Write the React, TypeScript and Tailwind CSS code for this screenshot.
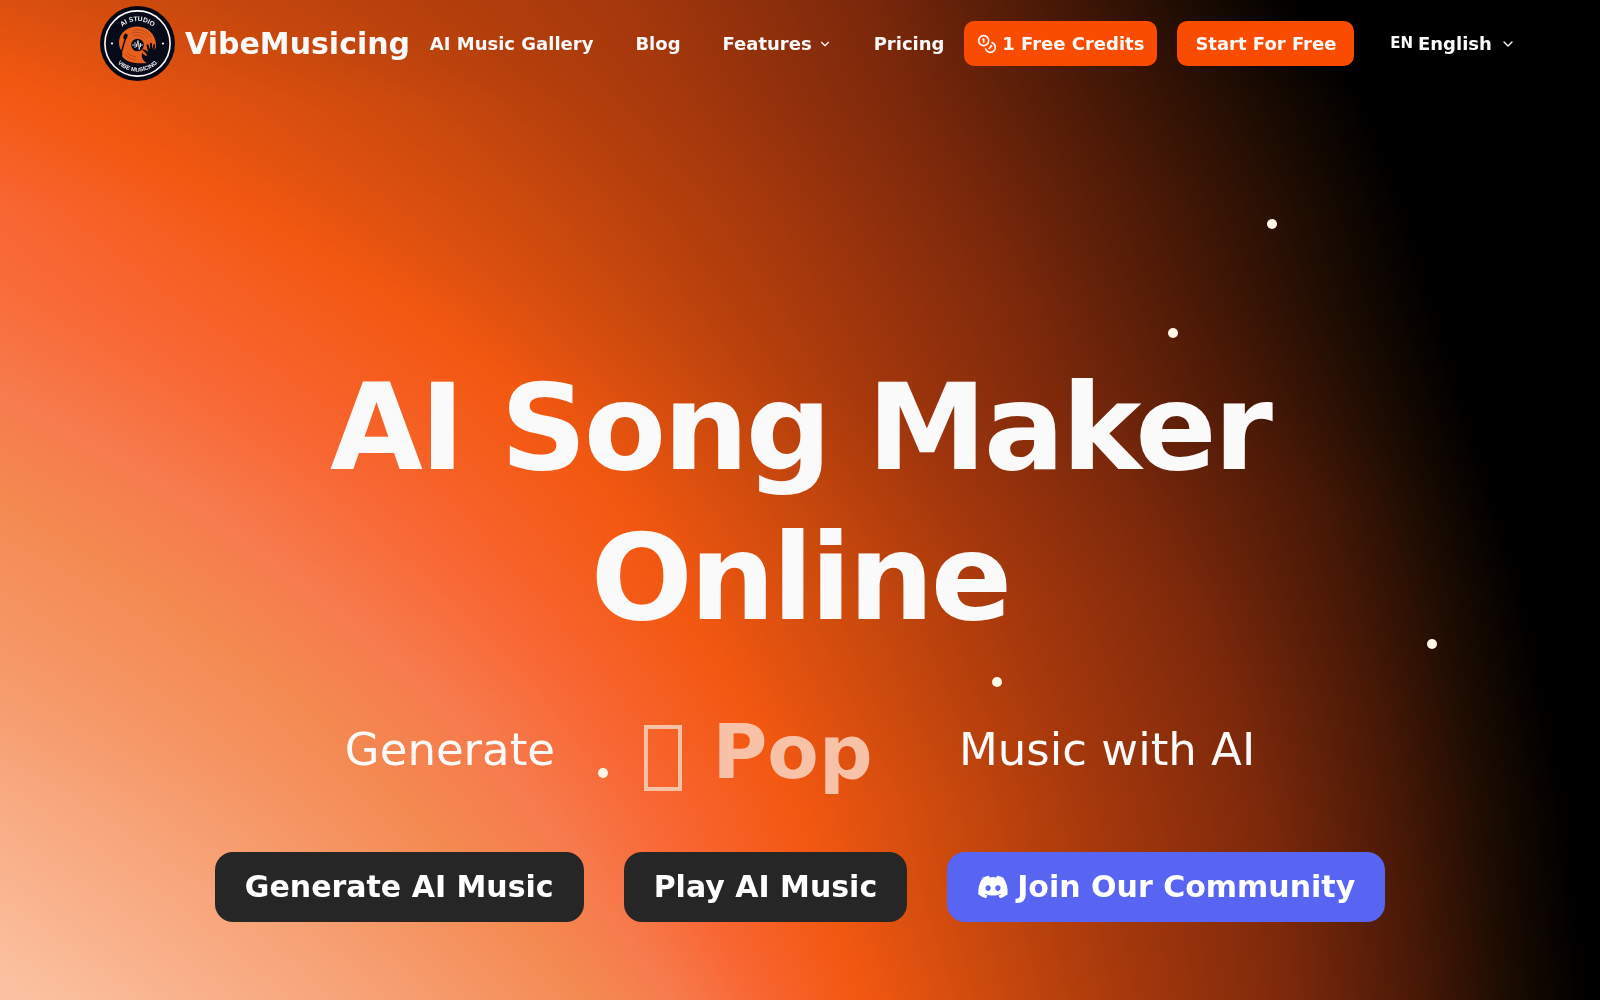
import { useLayoutEffect, useRef } from "react";
import { ChevronDown, Coins } from "lucide-react";
import { FaDiscord } from "react-icons/fa";

/* Colours of the glow, from its warm core to black. */
const GLOW_COLORS: number[][] = [
  [251, 193, 160],
  [247, 161, 117],
  [244, 138, 82],
  [247, 122, 76],
  [248, 102, 50],
  [243, 88, 17],
  [204, 74, 13],
  [166, 56, 12],
  [125, 41, 11],
  [70, 24, 6],
  [28, 12, 2],
  [0, 0, 0],
];

/* Where each colour sits (0-1600) on eleven evenly spaced rows of the page. */
const GLOW_ROWS: number[][] = [
  [-1100, -900, -750, -600, -420, -200, 150, 620, 860, 1060, 1190, 1300],
  [-1000, -820, -660, -480, -230, 50, 400, 680, 900, 1110, 1260, 1370],
  [-950, -760, -560, -340, 0, 230, 520, 760, 960, 1170, 1310, 1410],
  [-900, -680, -420, -160, 110, 400, 610, 820, 1020, 1210, 1340, 1440],
  [-820, -560, -210, 40, 260, 530, 700, 870, 1060, 1260, 1380, 1470],
  [-720, -420, 0, 210, 400, 615, 780, 940, 1130, 1320, 1420, 1500],
  [-580, -260, 170, 340, 505, 675, 850, 1010, 1190, 1350, 1450, 1530],
  [-430, -60, 300, 455, 590, 740, 890, 1050, 1230, 1380, 1470, 1550],
  [-280, 130, 400, 540, 660, 795, 940, 1090, 1260, 1400, 1490, 1570],
  [-120, 270, 500, 610, 705, 825, 960, 1110, 1280, 1415, 1500, 1580],
  [30, 380, 590, 680, 760, 860, 990, 1130, 1290, 1425, 1510, 1590],
];

function colorAt(x: number, stops: number[]): number[] {
  if (x <= stops[0]) return GLOW_COLORS[0];
  for (let i = 1; i < stops.length; i++) {
    if (x <= stops[i]) {
      const t = (x - stops[i - 1]) / (stops[i] - stops[i - 1]);
      return GLOW_COLORS[i].map((c, k) => GLOW_COLORS[i - 1][k] * (1 - t) + c * t);
    }
  }
  return GLOW_COLORS[GLOW_COLORS.length - 1];
}

function Glow() {
  const ref = useRef<HTMLCanvasElement>(null);
  useLayoutEffect(() => {
    const canvas = ref.current;
    const ctx = canvas?.getContext("2d");
    if (!canvas || !ctx) return;
    const { width, height } = canvas;
    const image = ctx.createImageData(width, height);
    for (let y = 0; y < height; y++) {
      const pos = (y / (height - 1)) * (GLOW_ROWS.length - 1);
      const row = Math.min(Math.floor(pos), GLOW_ROWS.length - 2);
      const t = pos - row;
      const stops = GLOW_ROWS[row].map((v, i) => v * (1 - t) + GLOW_ROWS[row + 1][i] * t);
      for (let x = 0; x < width; x++) {
        const [r, g, b] = colorAt((x / (width - 1)) * 1600, stops);
        image.data.set([r, g, b, 255], (y * width + x) * 4);
      }
    }
    ctx.putImageData(image, 0, 0);
  }, []);
  return <canvas ref={ref} width={400} height={250} aria-hidden="true" className="absolute inset-0 -z-10 h-full w-full" />;
}

function Logo() {
  return (
    <svg viewBox="0 0 75 75" className="size-[75px] shrink-0" aria-hidden="true">
      <defs>
        <path id="logo-top" d="M15 37.5a22.500 22.500 0 0 1 45 0" />
        <path id="logo-bottom" d="M9.5 37.5a28 28 0 0 0 56 0" />
      </defs>
      <circle cx="37.5" cy="37.5" r="37.5" fill="#050814" />
      <circle cx="37.5" cy="37.5" r="32.6" fill="#070a18" stroke="#fff" strokeWidth="1.6" />
      <g fill="#f4f4f4" fontFamily="'Liberation Sans', sans-serif" fontSize="6.6" fontWeight="700" textAnchor="middle">
        <text>
          <textPath href="#logo-top" startOffset="50%">AI STUDIO</textPath>
        </text>
        <text fontSize="5.8">
          <textPath href="#logo-bottom" startOffset="50%">VIBE MUSICING</textPath>
        </text>
      </g>
      <circle cx="12" cy="37.5" r="1.1" fill="#fff" />
      <circle cx="63" cy="37.5" r="1.1" fill="#fff" />
      <path d="M19 35C20 26 28 20.500 37.500 20.500 48 20.500 56 29 56 39c0 4-1 7-3 10l-7 1-4-3c-1 4 1 8 5 10-9 1-21 0-25-7 1-2 0-4-1-6-2-3-2-6-2-9z" fill="#e8601c" />
      <path d="M31 27.500a13 13 0 0 1 17 5M33 30a10 10 0 0 1 12 4M32 24.500a16 16 0 0 1 19 7M25 48a16 16 0 0 0 11 6M27 46a13 13 0 0 0 9 5" fill="none" stroke="#a8431a" strokeWidth=".7" />
      <path d="M25.500 32 21.500 46" stroke="#070a18" strokeWidth="1.400" />
      <ellipse cx="25.500" cy="30.500" rx="2" ry="3" transform="rotate(18 25.500 30.500)" fill="#070a18" />
      <circle cx="37.500" cy="39" r="6.300" fill="#070a18" />
      <path d="M33 38v2M35 36v6M36.500 38v3L38 34.500l1.200 9L40.500 37v4M42 38v2" fill="none" stroke="#dfe3ea" strokeWidth=".9" />
      <path d="M47 50c0-2-2-4-5-6 2-1 4 0 6 2l-1.500-7c.5-1 1.500-1 2 0l1.500 4.500V37.500c.5-1 1.500-1 2 0v6l1.500-5c.5-1 1.500-.5 1.500.5l-.5 5.500 1.500-3c1-.5 1.500 0 1 1.500l-2.500 7c-1 3-6 3-7.500 0z" fill="#070a18" />
    </svg>
  );
}

const PARTICLES = [
  "left-[79.2%] top-[21.9%]",
  "left-[73%] top-[32.8%]",
  "left-[89.2%] top-[63.9%]",
  "left-[62%] top-[67.7%]",
  "left-[37.4%] top-[76.8%]",
];

export default function App() {
  return (
    <div className="relative isolate min-h-screen overflow-hidden bg-black font-['DejaVu_Sans',sans-serif] text-neutral-50">
      <Glow />
      {PARTICLES.map((place) => (
        <span key={place} className={`absolute size-[10px] rounded-full bg-[#fff8e8] ${place}`} />
      ))}

      <header className="flex items-center justify-between pt-[6px] pr-[84px] pl-[100px] text-lg font-bold whitespace-nowrap">
        <a href="#home" className="flex items-center gap-[10px] text-3xl">
          <Logo />
          VibeMusicing
        </a>
        <nav className="flex items-center gap-[42px]">
          <a href="#gallery">AI Music Gallery</a>
          <a href="#blog">Blog</a>
          <button type="button" className="flex items-center gap-[6px]">
            Features
            <ChevronDown className="size-[14px]" strokeWidth={2} />
          </button>
          <a href="#pricing">Pricing</a>
        </nav>
        <div className="flex items-center gap-5">
          <button type="button" className="flex h-[45px] items-center gap-[5px] rounded-[10px] bg-[#f94c00] px-[13px]">
            <Coins className="size-5" strokeWidth={2} />
            1 Free Credits
          </button>
          <button type="button" className="h-[45px] rounded-[10px] bg-[#f94c00] px-[18px]">
            Start For Free
          </button>
        </div>
        <label className="relative flex items-center gap-[5px] pl-4">
          <span className="text-[15px]">EN</span>
          <select aria-label="Language" className="w-[98px] appearance-none bg-transparent font-bold outline-none">
            <option>English</option>
          </select>
          <ChevronDown className="pointer-events-none absolute right-0 size-4" strokeWidth={2} />
        </label>
      </header>

      <main className="flex flex-col items-center px-5 pt-[272px]">
        <h1 className="max-w-[1200px] text-center text-[120px] leading-[150px] font-bold tracking-tight">
          AI Song Maker
          <br />
          Online
        </h1>
        <div className="mt-[52px] flex h-[90px] items-center justify-center text-[45px] whitespace-nowrap">
          <span>Generate</span>
          <div className="flex w-[404px] items-center justify-center gap-[30px] pt-1 pl-[3px] text-[75px] leading-none font-bold text-[#f8c2a8]">
            <span className="mt-3 h-[66px] w-[38px] border-4 border-current" />
            <span>Pop</span>
          </div>
          <span>Music with AI</span>
        </div>
        <div className="mt-[57px] flex flex-wrap justify-center gap-10 pb-[70px] text-3xl font-bold text-white">
          <button type="button" className="h-[70px] rounded-[18px] bg-neutral-800 px-[30px]">
            Generate AI Music
          </button>
          <button type="button" className="h-[70px] rounded-[18px] bg-neutral-800 px-[30px]">
            Play AI Music
          </button>
          <button type="button" className="flex h-[70px] items-center gap-2 rounded-[18px] bg-[#5865f2] px-[30px]">
            <FaDiscord className="size-8" />
            Join Our Community
          </button>
        </div>
      </main>
    </div>
  );
}
